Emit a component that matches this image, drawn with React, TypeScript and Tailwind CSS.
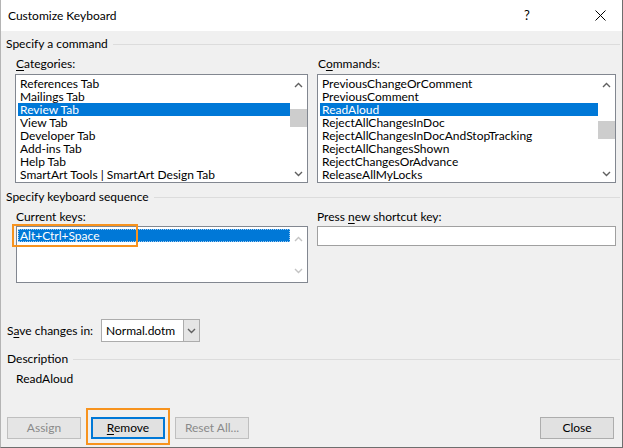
import React from "react";

const FONT = { fontFamily: '"Segoe UI", Lato, "Noto Sans", sans-serif' };

function Chevron({ up, disabled }: { up?: boolean; disabled?: boolean }) {
  return (
    <svg width="9" height="6" viewBox="0 0 9 6" className="block">
      <path
        d={up ? "M1 5 L4.5 1.5 L8 5" : "M1 1 L4.5 4.5 L8 1"}
        fill="none"
        stroke={disabled ? "#c4c4c4" : "#606060"}
        strokeWidth="1.4"
      />
    </svg>
  );
}

function GroupHeader({ title }: { title: string }) {
  return (
    <div className="flex items-center h-[16px] gap-[5px]">
      <span className="whitespace-nowrap">{title}</span>
      <div className="flex-1 h-px bg-[#dcdcdc]" />
    </div>
  );
}

function ListBox({
  items,
  selected,
  thumbTop,
  width,
}: {
  items: string[];
  selected: number;
  thumbTop: number;
  width: string;
}) {
  return (
    <div className={`${width} h-[109px] border border-[#828790] bg-white flex`}>
      <div className="flex-1 flex flex-col pt-[2px] pl-[2px] overflow-hidden">
        {items.map((t, i) => (
          <div
            key={t}
            className={`h-[13px] leading-[13px] pl-[2px] whitespace-nowrap ${
              i === selected ? "bg-[#0078d7] text-white" : "text-black"
            }`}
          >
            {t}
          </div>
        ))}
      </div>
      <div className="w-[17px] flex flex-col items-center">
        <div className="h-[19px] flex items-center justify-center">
          <Chevron up />
        </div>
        <div className="flex-1 w-full relative">
          <div
            className="absolute left-0 right-0 h-[18px] bg-[#cdcdcd]"
            style={{ top: thumbTop }}
          />
        </div>
        <div className="h-[17px] flex items-center justify-center">
          <Chevron />
        </div>
      </div>
    </div>
  );
}

function Btn({
  children,
  disabled,
  cls = "",
}: {
  children: React.ReactNode;
  disabled?: boolean;
  cls?: string;
}) {
  return (
    <div
      className={`w-[74px] h-[22px] flex items-center justify-center border ${
        disabled
          ? "border-[#bfbfbf] bg-[#e5e5e5] text-[#8a8a8a]"
          : "border-[#adadad] bg-[#e1e1e1] text-black"
      } ${cls}`}
    >
      {children}
    </div>
  );
}

export default function App() {
  return (
    <div
      className="w-[623px] h-[448px] bg-[#f0f0f0] border-l border-r border-b border-l-[#b4b4b4] border-r-[#6e6e6e] border-b-[#6e6e6e] flex flex-col text-[12px] text-black overflow-hidden"
      style={FONT}
    >
      {/* Title bar */}
      <div className="h-[31px] bg-white flex items-center pl-[7px] shrink-0">
        <span className="flex-1 text-[12px]">Customize Keyboard</span>
        <span className="w-[46px] text-center text-[13px] mr-[26px]">?</span>
        <div className="w-[46px] flex justify-center pl-[2px]">
          <svg width="11" height="11" viewBox="0 0 11 11">
            <path d="M0.5 0.5 L10.5 10.5 M10.5 0.5 L0.5 10.5" stroke="#000" strokeWidth="1" />
          </svg>
        </div>
      </div>

      {/* Body */}
      <div className="flex-1 flex flex-col pl-[5px] pr-[2px] pt-[5px]">
        <GroupHeader title="Specify a command" />

        <div className="flex mt-[4px] pl-[9px] gap-[9px]">
          <div className="flex flex-col">
            <div className="h-[16px] leading-[16px] pl-[1px]">
              <span className="underline underline-offset-2">C</span>ategories:
            </div>
            <div className="mt-[2px]">
              <ListBox
                width="w-[293px]"
                selected={2}
                thumbTop={15}
                items={[
                  "References Tab",
                  "Mailings Tab",
                  "Review Tab",
                  "View Tab",
                  "Developer Tab",
                  "Add-ins Tab",
                  "Help Tab",
                  "SmartArt Tools | SmartArt Design Tab",
                ]}
              />
            </div>
          </div>
          <div className="flex flex-col">
            <div className="h-[16px] leading-[16px] pl-[1px]">
              C<span className="underline underline-offset-2">o</span>mmands:
            </div>
            <div className="mt-[2px]">
              <ListBox
                width="w-[299px]"
                selected={2}
                thumbTop={27}
                items={[
                  "PreviousChangeOrComment",
                  "PreviousComment",
                  "ReadAloud",
                  "RejectAllChangesInDoc",
                  "RejectAllChangesInDocAndStopTracking",
                  "RejectAllChangesShown",
                  "RejectChangesOrAdvance",
                  "ReleaseAllMyLocks",
                ]}
              />
            </div>
          </div>
        </div>

        <div className="mt-[6px]">
          <GroupHeader title="Specify keyboard sequence" />
        </div>

        <div className="flex mt-[4px] pl-[10px] gap-[9px]">
          <div className="flex flex-col">
            <div className="h-[16px] leading-[16px]">Current keys:</div>
            <div className="mt-[1px] relative w-[292px] h-[57px] border border-[#828790] bg-white flex">
              <div className="flex-1 pt-[2px] pl-[1px]">
                <div className="h-[13px] leading-[13px] bg-[#0078d7] text-white pl-[2px] outline-1 outline-dotted outline-[#9ec9ef] -outline-offset-1">
                  Alt+Ctrl+Space
                </div>
              </div>
              <div className="w-[17px] flex flex-col items-center justify-between pt-[9px] pb-[8px]">
                <Chevron up disabled />
                <Chevron disabled />
              </div>
              <div className="absolute left-[-5px] top-[-3px] w-[126px] h-[23px] border-2 border-[#f7931e]" />
            </div>
          </div>
          <div className="flex flex-col">
            <div className="h-[16px] leading-[16px]">
              Press <span className="underline underline-offset-2">n</span>ew shortcut key:
            </div>
            <div className="mt-[1px] w-[299px] h-[20px] border border-[#a0a0a0] bg-white" />
          </div>
        </div>

        <div className="flex items-center mt-[36px] pl-[1px] h-[23px]">
          <span className="w-[94px]">
            S<span className="underline underline-offset-2">a</span>ve changes in:
          </span>
          <div className="w-[99px] h-[23px] border border-[#acacac] bg-white flex">
            <span className="flex-1 leading-[21px] pl-[4px]">Normal.dotm</span>
            <div className="w-[16px] bg-[#e5e5e5] border-l border-[#acacac] flex items-center justify-center">
              <Chevron />
            </div>
          </div>
        </div>

        <div className="mt-[9px] pl-[1px]">
          <div className="flex items-center h-[16px] gap-[5px]">
            <span>Description</span>
            <div className="flex-1 h-px bg-[#dcdcdc]" />
          </div>
        </div>
        <div className="mt-[4px] pl-[10px] h-[16px] leading-[16px]">ReadAloud</div>

        <div className="mt-[30px] flex items-center pl-[1px] pr-[6px]">
          <Btn disabled>Assign</Btn>
          <div className="relative ml-[10px]">
            <div className="w-[74px] h-[22px] flex items-center justify-center border-2 border-[#0078d7] bg-[#e1e1e1]">
              <span>
                <span className="underline underline-offset-2">R</span>emove
              </span>
            </div>
            <div className="absolute left-[-5px] top-[-9px] w-[84px] h-[37px] border-2 border-[#f7931e]" />
          </div>
          <Btn disabled cls="ml-[10px]">Reset All...</Btn>
          <div className="flex-1" />
          <Btn>Close</Btn>
        </div>
      </div>
    </div>
  );
}
